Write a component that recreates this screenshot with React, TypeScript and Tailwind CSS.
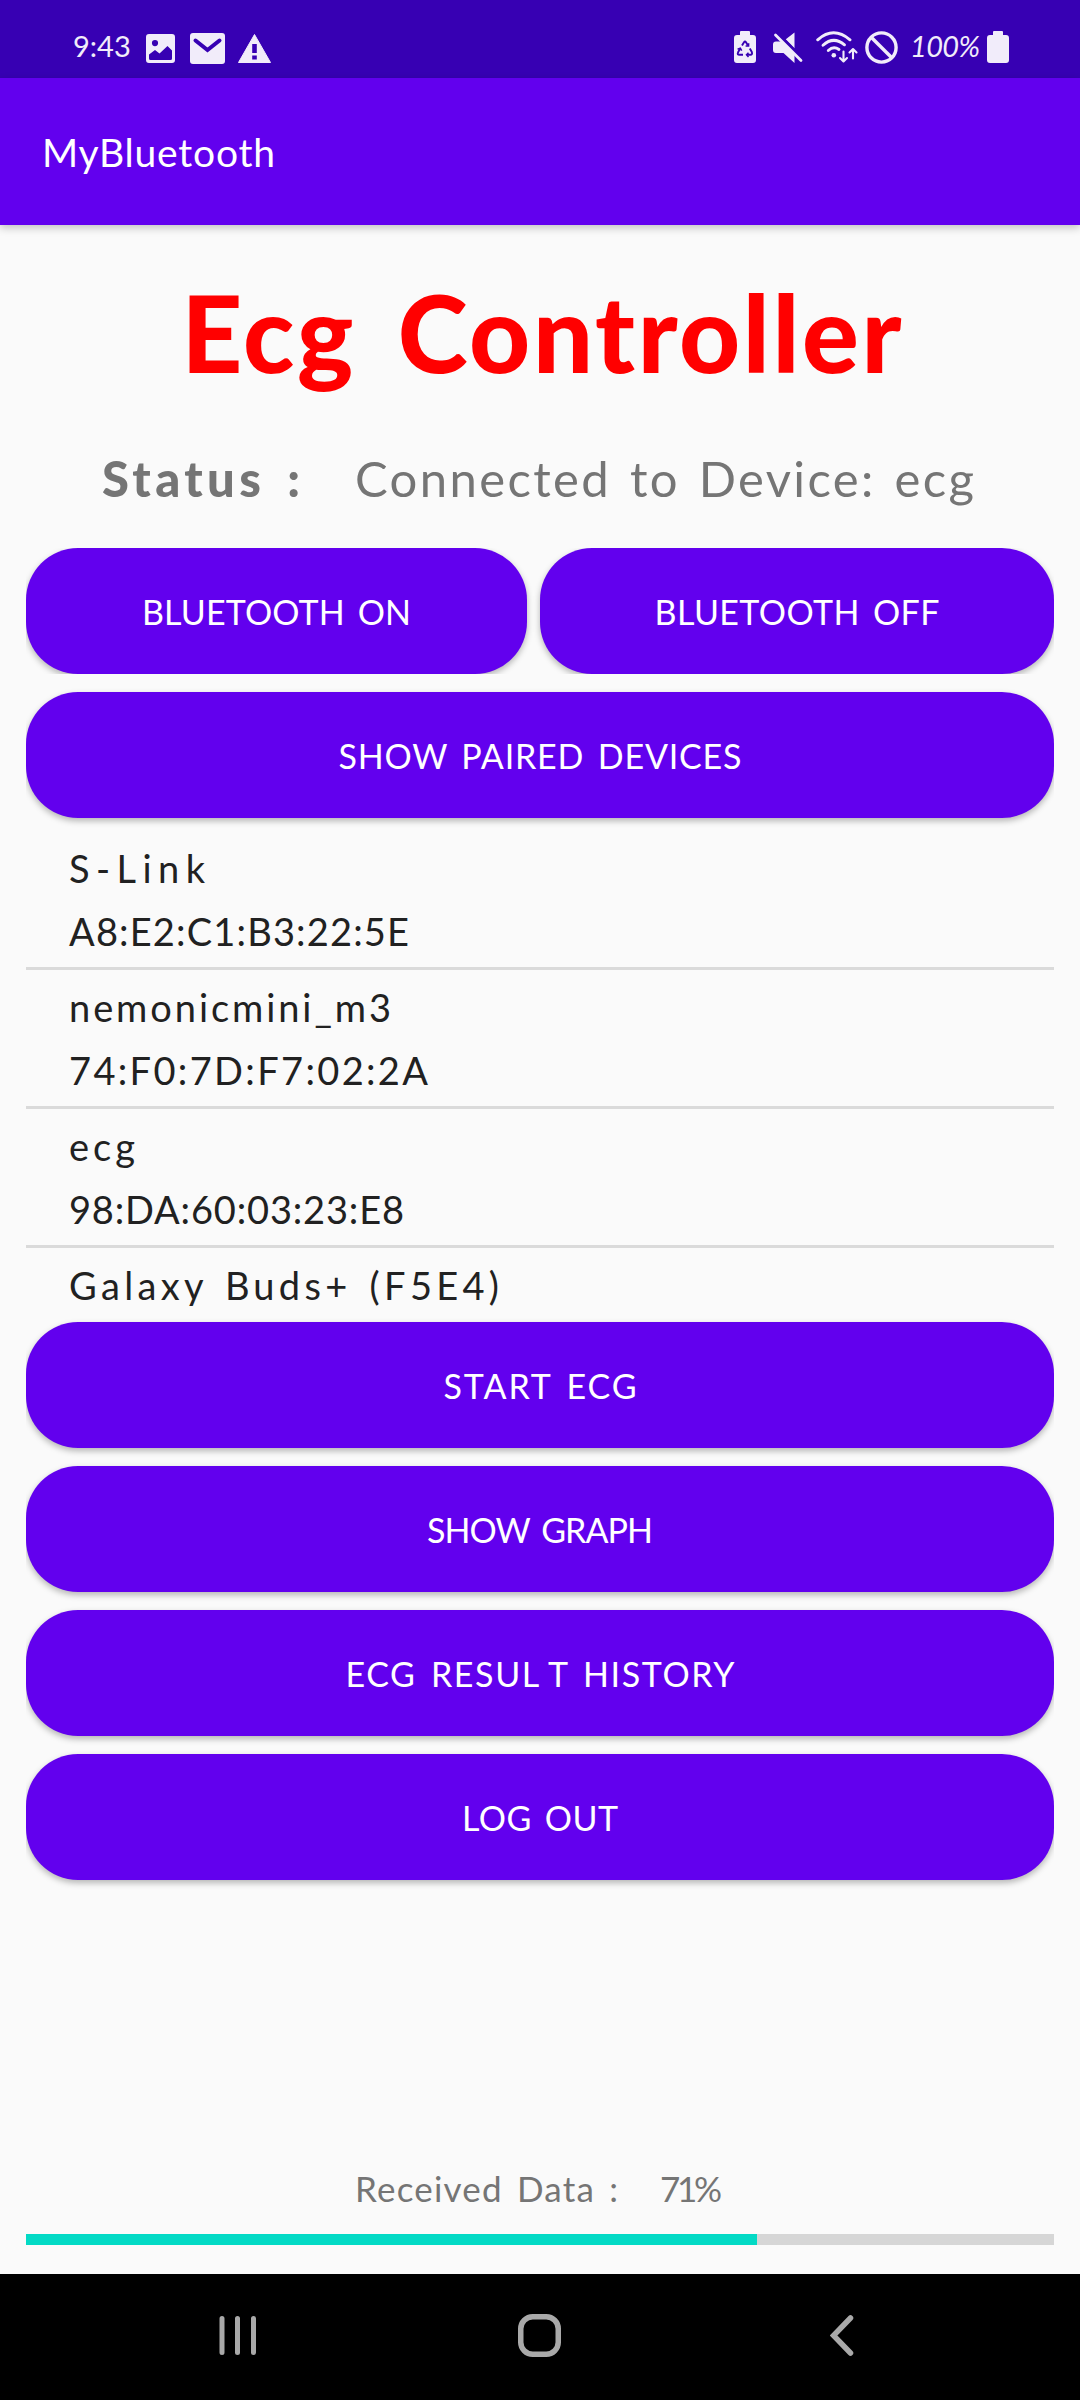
import { useLayoutEffect, useRef, useState, type ReactNode } from 'react';

/** Single line of text whose tracking is computed so that it spans `width` pixels. */
function FitText({ width, className = '', children }: { width: number; className?: string; children: ReactNode }) {
  const ref = useRef<HTMLSpanElement>(null);
  const [spacing, setSpacing] = useState(0);

  useLayoutEffect(() => {
    const el = ref.current;
    if (!el) return;
    const count = (el.textContent ?? '').length;
    el.style.letterSpacing = '0px';
    el.style.marginRight = '0px';
    const next = (width - el.getBoundingClientRect().width) / Math.max(1, count - 1);
    el.style.letterSpacing = `${next}px`;
    el.style.marginRight = `${-next}px`;
    setSpacing(next);
  }, [width]);

  return (
    <span
      ref={ref}
      className={`inline-block whitespace-pre ${className}`}
      style={{ letterSpacing: `${spacing}px`, marginRight: `${-spacing}px` }}
    >
      {children}
    </span>
  );
}

function ImageIcon() {
  return (
    <svg className="h-[29px] w-[29px]" viewBox="0 0 29 29" fill="currentColor">
      <path
        fillRule="evenodd"
        d="M3 0h23a3 3 0 0 1 3 3v23a3 3 0 0 1-3 3H3a3 3 0 0 1-3-3V3a3 3 0 0 1 3-3ZM9 6a3.1 3.1 0 1 0 0 6.200a3.100 3.100 0 0 0 0-6.200ZM3 20.500V24.500q0 1.500 1.500 1.500H24.500q1.500 0 1.500-1.500V16.500L21.500 12L13.500 19.500L9 16Z"
      />
    </svg>
  );
}

function MailIcon() {
  return (
    <svg className="h-[31px] w-[35px]" viewBox="0 0 35 31">
      <rect width="35" height="31" rx="3" fill="currentColor" />
      <path d="M5.500 7.500L17.500 17L29.500 7.500" fill="none" stroke="#3700b3" strokeWidth="4" strokeLinecap="round" />
    </svg>
  );
}

function WarningIcon() {
  return (
    <svg className="h-[29px] w-[33px]" viewBox="0 0 33 29">
      <path d="M16.500 .5L32.500 28.500H.5Z" fill="currentColor" stroke="currentColor" strokeLinejoin="round" />
      <path d="M14.200 10h4.600v9h-4.600zM14.200 21.500h4.600v4h-4.600z" fill="#3700b3" />
    </svg>
  );
}

function BatteryIcon({ saver = false }: { saver?: boolean }) {
  return (
    <svg className="h-[32px] w-[22px]" viewBox="0 0 22 32">
      <path
        d="M7 0h8q1 0 1 1v3h3q3 0 3 3v22q0 3-3 3H3q-3 0-3-3V7q0-3 3-3h3V1q0-1 1-1Z"
        fill="currentColor"
      />
      {saver && (
        <g fill="none" stroke="#3700b3" strokeWidth="1.900">
          <path d="M8 14.500L10 11.200q1-1.500 2 0L14 14.500" />
          <path d="M15.800 17.500L17.800 21q1 2.800-1.500 2.800H13" />
          <path d="M9 23.800H5.500q-2.600 0-1.400-2.500L6.200 17.500" />
          <path d="M14.600 12.200v2.900h-3M3.600 18.300l2.700-1.200 1.400 2.500M14.500 21.700l-2 2.100 2 2.100" strokeWidth="1.500" />
        </g>
      )}
    </svg>
  );
}

function MuteIcon() {
  return (
    <svg className="h-[31px] w-[30px]" viewBox="0 0 30 31">
      <path
        d="M3 9.500h6L21.500 22v9L10.500 21H3q-3 0-3-3v-5.500q0-3 3-3ZM12.500 7.500L21.500 .5V16.500Z"
        fill="currentColor"
      />
      <path d="M4.500 2L29.500 27.500" fill="none" stroke="#3700b3" strokeWidth="4.500" />
      <path d="M2.500 3L28 28.500" fill="none" stroke="currentColor" strokeWidth="2.800" strokeLinecap="round" />
    </svg>
  );
}

function WifiIcon() {
  return (
    <svg className="h-[32px] w-[42px]" viewBox="0 0 42 32" fill="none" stroke="currentColor" strokeLinecap="round">
      <path d="M1.700 8.800Q17.500-5.200 34 8.800" strokeWidth="2.900" />
      <path d="M7 14.300Q17.500 4.700 28.500 13.800" strokeWidth="2.900" />
      <path d="M12.300 19.500Q17.500 14.500 23 18.500" strokeWidth="2.900" />
      <circle cx="17.800" cy="24.300" r="2.300" fill="currentColor" stroke="none" />
      <path
        d="M27.500 20.500V29.500M24 27L27.500 30.500L31 27M37 27.500V18.500M33.500 21.500L37 18L40.500 21.500"
        strokeWidth="2.100"
        strokeLinejoin="round"
      />
    </svg>
  );
}

function BlockedIcon() {
  return (
    <svg className="h-[33px] w-[33px]" viewBox="0 0 33 33" fill="none" stroke="currentColor" strokeWidth="3.400">
      <circle cx="16.500" cy="16.500" r="14.600" />
      <path d="M6.200 6.200L26.800 26.800" />
    </svg>
  );
}

function StatusBar() {
  return (
    <div className="flex h-[78px] items-start bg-[#3700b3] pt-[30px] pl-[73px] text-[#f1ecfa]">
      <div className="flex h-[34px] items-center">
        <FitText width={55} className="relative -top-[2px] w-[55px] text-[29px]">
          9:43
        </FitText>
        <div className="ml-[18px] flex items-center pt-[3px] text-[#f1ecfa]">
          <ImageIcon />
          <div className="mr-[13px] ml-[15px]">
            <MailIcon />
          </div>
          <WarningIcon />
        </div>
      </div>
      <div className="mr-[71px] ml-auto flex h-[34px] items-center">
        <BatteryIcon saver />
        <div className="ml-[17px]">
          <MuteIcon />
        </div>
        <div className="ml-[13px]">
          <WifiIcon />
        </div>
        <div className="ml-[7px]">
          <BlockedIcon />
        </div>
        <div className="ml-[12px] w-[77px]">
          <FitText width={70} className="relative -top-[2px] text-[29px] italic">
            100%
          </FitText>
        </div>
        <BatteryIcon />
      </div>
    </div>
  );
}

function ActionButton({ className = 'w-full', textWidth, children }: { className?: string; textWidth: number; children: ReactNode }) {
  return (
    <button
      className={`flex h-[126px] shrink-0 items-center justify-center rounded-[52px] bg-[#6200ee] pt-[1px] text-[34px] text-white shadow-[0_3px_6px_rgba(0,0,0,0.28)] ${className}`}
    >
      <FitText width={textWidth} className="[word-spacing:4px]">
        {children}
      </FitText>
    </button>
  );
}

const devices = [
  { name: 'S-Link', nameWidth: 136, address: 'A8:E2:C1:B3:22:5E', addressWidth: 340 },
  { name: 'nemonicmini_m3', nameWidth: 322, address: '74:F0:7D:F7:02:2A', addressWidth: 359 },
  { name: 'ecg', nameWidth: 66, address: '98:DA:60:03:23:E8', addressWidth: 335 },
  { name: 'Galaxy Buds+ (F5E4)', nameWidth: 430, address: '', addressWidth: 0 },
];

function DeviceList() {
  return (
    <ul className="h-[475px] overflow-hidden text-[38px] text-[#212121]">
      {devices.map((d) => (
        <li key={d.name} className="flex h-[139px] flex-col border-b-[3px] border-[#dadada] pt-[6px] pl-[43px]">
          <div className="h-[63px] shrink-0 leading-[63px]">
            <FitText width={d.nameWidth} className="[word-spacing:4px]">
              {d.name}
            </FitText>
          </div>
          {d.address && (
            <div className="h-[63px] shrink-0 leading-[63px]">
              <FitText width={d.addressWidth}>{d.address}</FitText>
            </div>
          )}
        </li>
      ))}
    </ul>
  );
}

function NavigationBar() {
  return (
    <nav className="flex h-[126px] items-center bg-black pb-[3px] text-[#a9a9a9]">
      <svg className="ml-[219px] h-[43px] w-[37px]" viewBox="0 0 37 43" stroke="currentColor" strokeWidth="5" strokeLinecap="round">
        <path d="M3 4.500V38.500M18.500 4.500V38.500M34.500 4.500V38.500" />
      </svg>
      <svg className="ml-[262px] h-[43px] w-[43px]" viewBox="0 0 43 43" fill="none" stroke="currentColor" strokeWidth="5.500">
        <rect x="2.750" y="2.750" width="37.500" height="37.500" rx="12" />
      </svg>
      <svg className="ml-[269px] h-[43px] w-[25px]" viewBox="0 0 25 43" fill="none" stroke="currentColor" strokeWidth="5.500" strokeLinecap="round">
        <path d="M20.500 4L3.500 21.500L20.500 39" />
      </svg>
    </nav>
  );
}

export default function App() {
  const progress = 71.1;
  return (
    <div className="flex h-[2400px] w-[1080px] flex-col overflow-hidden bg-[#fafafa] font-['Lato',sans-serif] leading-none">
      <StatusBar />
      <header className="z-10 flex h-[147px] shrink-0 items-center bg-[#6200ee] pt-[1px] pl-[42px] text-[39px] text-white shadow-[0_3px_8px_rgba(0,0,0,0.22)]">
        <FitText width={233}>MyBluetooth</FitText>
      </header>

      <main className="mx-[26px] flex min-h-0 flex-1 flex-col overflow-x-clip">
        <h1 className="mt-[47px] flex h-[124px] items-start justify-center pl-[3px] text-[106px] leading-[120px] font-black text-[#ff0000]">
          <FitText width={720} className="[word-spacing:14px]">
            Ecg Controller
          </FitText>
        </h1>

        <div className="mt-[52px] flex h-[60px] items-center pl-[76px] text-[49px] text-[#757575]">
          <div className="w-[253px] font-black">
            <FitText width={198} className="[word-spacing:6px]">
              Status :
            </FitText>
          </div>
          <FitText width={619} className="[word-spacing:4px]">
            Connected to Device: ecg
          </FitText>
        </div>

        <div className="mt-[40px] flex gap-[13px] overflow-hidden">
          <ActionButton className="w-[501px]" textWidth={269}>
            BLUETOOTH ON
          </ActionButton>
          <ActionButton className="flex-1" textWidth={285}>
            BLUETOOTH OFF
          </ActionButton>
        </div>
        <div className="mt-[18px]">
          <ActionButton textWidth={403}>SHOW PAIRED DEVICES</ActionButton>
        </div>

        <div className="mt-[13px]">
          <DeviceList />
        </div>

        <div className="mt-[16px] flex flex-col gap-[18px]">
          <ActionButton textWidth={193}>START ECG</ActionButton>
          <ActionButton textWidth={226}>SHOW GRAPH</ActionButton>
          <ActionButton textWidth={389}>
            ECG RESU<span className="mr-[7px]">L</span>T HISTORY
          </ActionButton>
          <ActionButton textWidth={156}>LOG OUT</ActionButton>
        </div>

        <div className="mt-auto mb-[29px]">
          <div className="flex h-[40px] items-center pl-[329px] text-[35px] text-[#757575]">
            <div className="w-[305px]">
              <FitText width={263} className="[word-spacing:4px]">
                Received Data :
              </FitText>
            </div>
            <FitText width={62}>71%</FitText>
          </div>
          <div className="mt-[26px] h-[11px] bg-[#d6d6d6]">
            <div className="h-full bg-[#03dac5]" style={{ width: `${progress}%` }} />
          </div>
        </div>
      </main>

      <NavigationBar />
    </div>
  );
}
